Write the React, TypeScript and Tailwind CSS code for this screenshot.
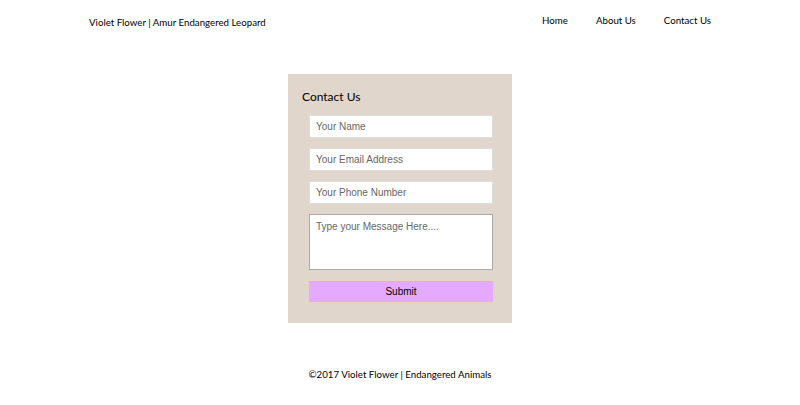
export default function App() {
  return (
    <div className="min-h-[405px] w-[800px] bg-white text-black" style={{ fontFamily: 'Lato, "Open Sans", sans-serif' }}>
      <header className="flex h-[42px] items-start justify-between pl-[89px] pr-[89px]">
        <div className="pt-[16px] text-[9.7px] leading-[12px]">Violet Flower | Amur Endangered Leopard</div>
        <nav className="flex gap-[28px] pt-[14px] text-[9.7px] leading-[12px]">
          <a href="#">Home</a>
          <a href="#">About Us</a>
          <a href="#">Contact Us</a>
        </nav>
      </header>
      <main className="flex justify-center pt-[32px]">
        <form className="flex w-[224px] flex-col bg-[#e0d6cb] pb-[21px] pl-[14px] pr-[19px] pt-[16px]">
          <h2 className="mb-[11px] text-[12px] leading-[14px]">Contact Us</h2>
          <div className="flex flex-col gap-[10px] pl-[7px]" style={{ fontFamily: '"Liberation Sans", Arial, sans-serif' }}>
            <input className="h-[23px] w-[184px] border border-[#ddd] bg-white px-[6px] text-[10px] outline-none placeholder:text-[#666]" placeholder="Your Name" />
            <input className="h-[23px] w-[184px] border border-[#ddd] bg-white px-[6px] text-[10px] outline-none placeholder:text-[#666]" placeholder="Your Email Address" />
            <input className="h-[23px] w-[184px] border border-[#ddd] bg-white px-[6px] text-[10px] outline-none placeholder:text-[#666]" placeholder="Your Phone Number" />
            <textarea className="h-[56px] w-[184px] resize-none border border-[#aaa] bg-white px-[6px] py-[4px] text-[10px] outline-none placeholder:text-[#666]" placeholder="Type your Message Here...." />
            <button type="button" className="mt-[1px] h-[21px] w-[184px] bg-[#e4aaff] text-[10px]">Submit</button>
          </div>
        </form>
      </main>
      <footer className="pt-[45px] text-center text-[9.7px] leading-[12px]">©2017 Violet Flower | Endangered Animals</footer>
    </div>
  );
}
